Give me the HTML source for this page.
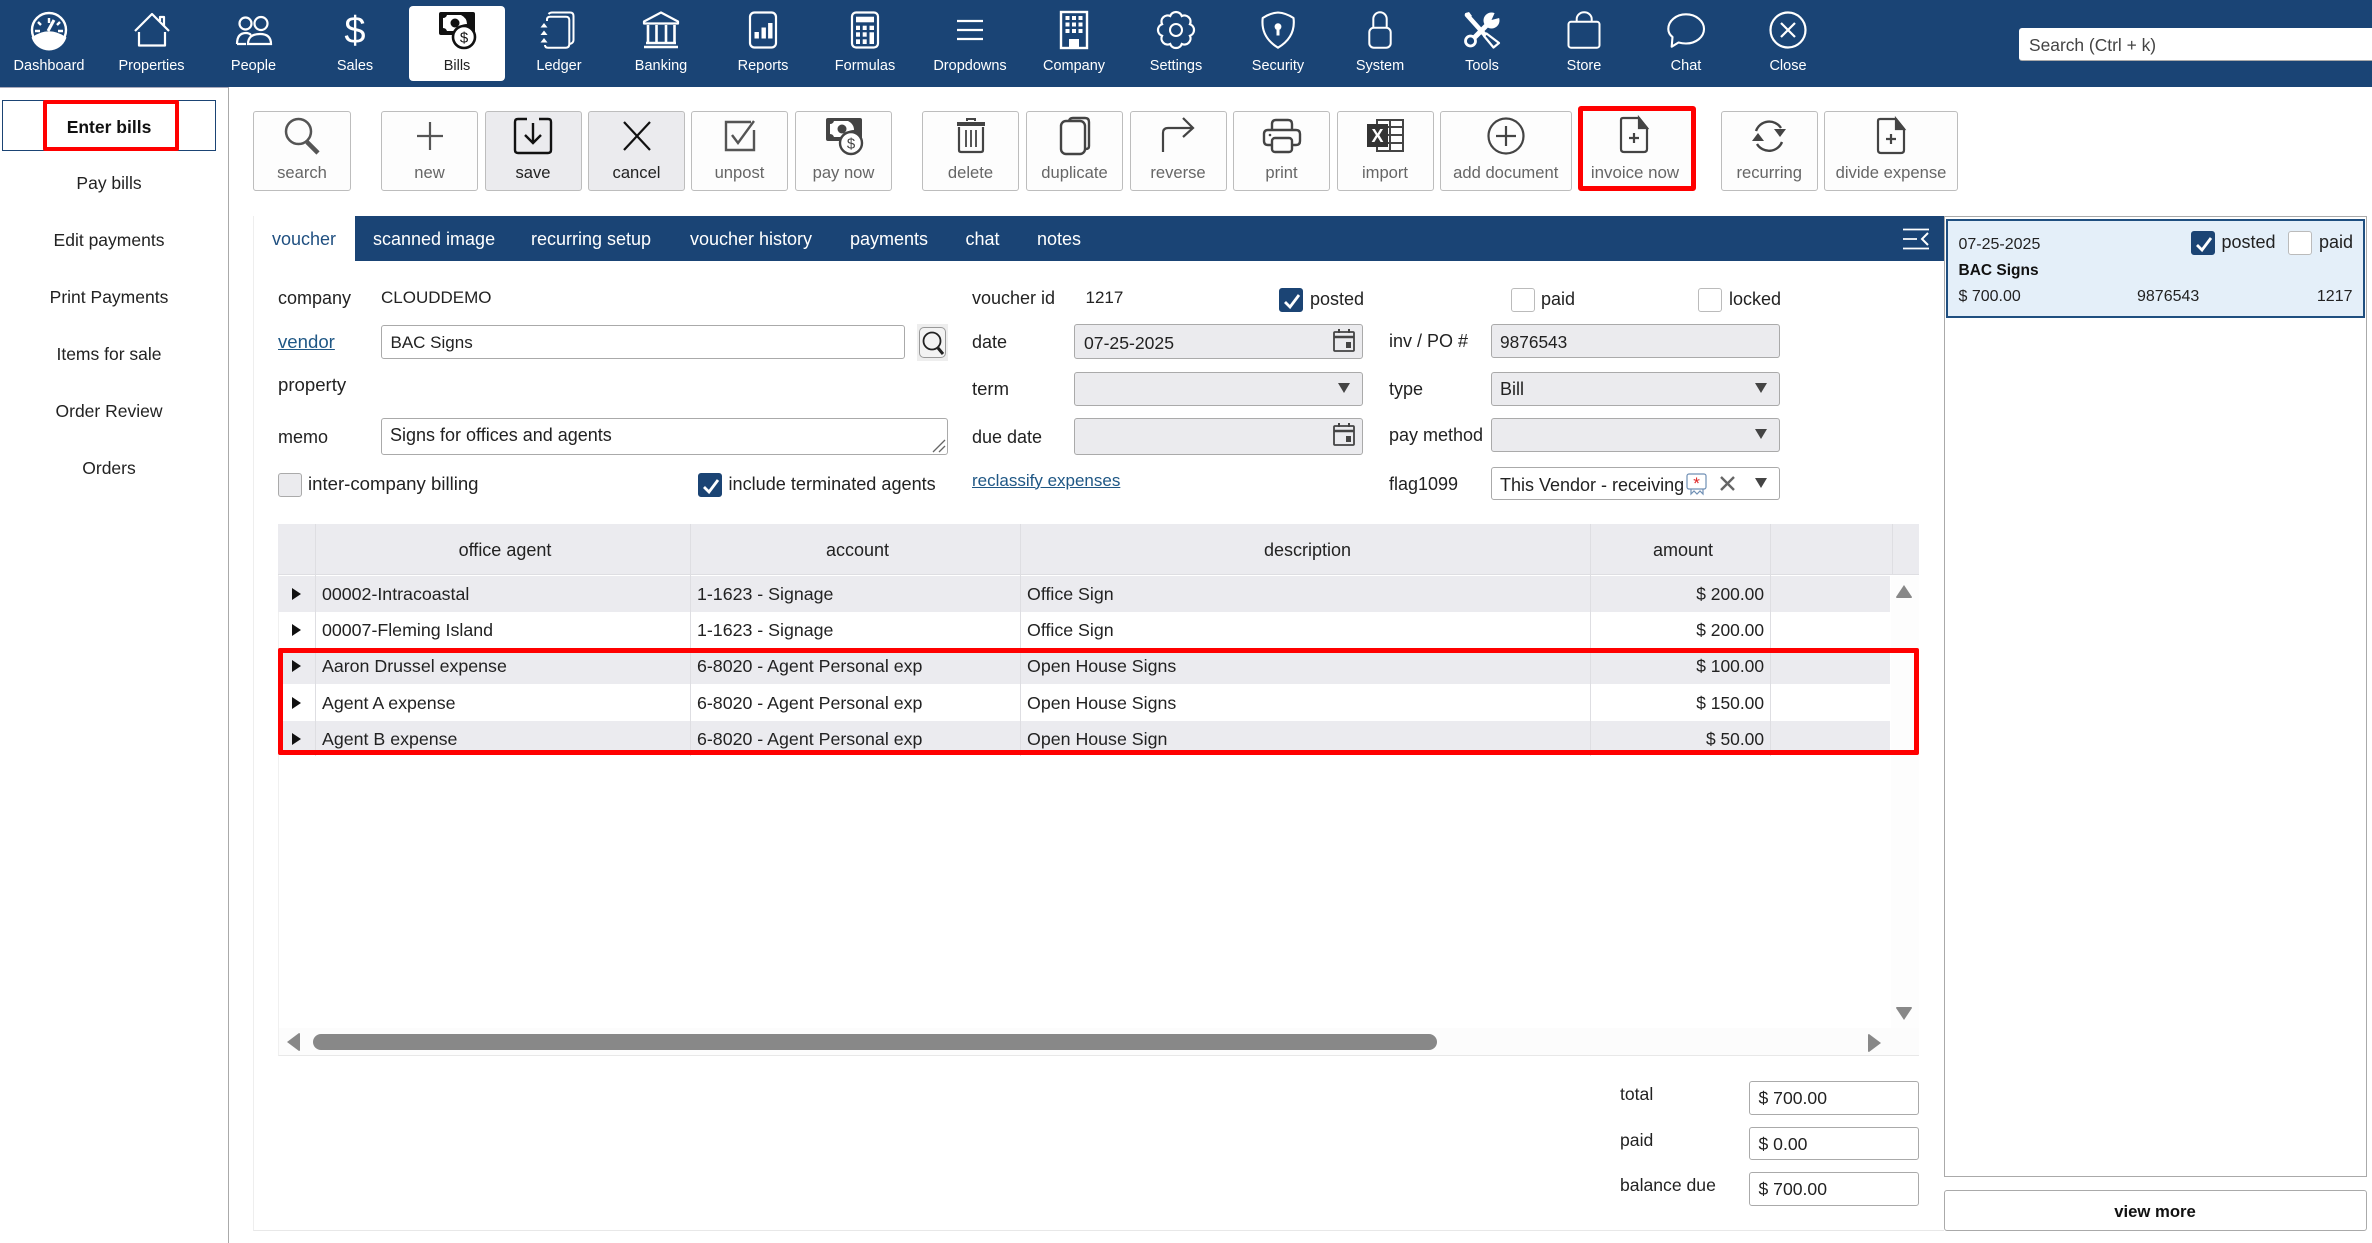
<!DOCTYPE html>
<html lang="en"><head><meta charset="utf-8"><title>Bills</title>
<style>
html,body{margin:0;padding:0;background:#fff}
body{position:relative;width:2372px;height:1243px;overflow:hidden;font-family:"Liberation Sans",sans-serif;color:#222}
.t{position:absolute;line-height:24px;white-space:nowrap;font-size:18px}
.c{transform:translateX(-50%)}
.r{transform:translateX(-100%)}
.b{position:absolute;box-sizing:border-box}
svg{position:absolute;overflow:visible}
.n{color:#fff;font-size:14.5px;top:53.5px}
.ni{top:10px;width:40px;height:40px}
.tb{position:absolute;box-sizing:border-box;top:111px;height:80px;border:1.5px solid #bdbdbd;border-radius:3px;background:#fdfdfd}
.tb span{position:absolute;left:0;right:0;text-align:center;top:49px;line-height:24px;font-size:16.6px;color:#666;white-space:nowrap}
.tb.d{background:#ebebee}.tb.d span{color:#222}
.tb svg{left:50%;margin-left:-20px;top:5.5px;width:40px;height:36px}
.side{font-size:17.5px;left:109px}
.tab{color:#fff;font-size:18px;top:227px}
.inp{position:absolute;box-sizing:border-box;border:1.5px solid #aaa;border-radius:3px;background:#fff}
.g{background:#ebebee}
.cb{position:absolute;box-sizing:border-box;width:24px;height:24px;border:1.5px solid #bbb;border-radius:3px;background:#fff}
.cb.on{background:#1b4474;border-color:#1b4474}
.cb.off{background:#ebebee;border-color:#aaa}
.cb svg{left:0;top:0;width:24px;height:24px}
.lk{color:#1f5785;text-decoration:underline}
.row{position:absolute;left:278px;width:1612px;background:#ebebef}
.vl{position:absolute;width:1px;top:524px;height:232px;background:#dedee2}
.tri{position:absolute;left:292px;width:0;height:0;border-top:6px solid transparent;border-bottom:6px solid transparent;border-left:9px solid #111}
.dn{position:absolute;width:0;height:0;border-left:6px solid transparent;border-right:6px solid transparent;border-top:10px solid #444}
</style></head><body>

<!-- NAV -->
<div class="b" style="left:0;top:0;width:2372px;height:87px;background:#1a4475"></div>
<div class="b" style="left:409px;top:6px;width:96px;height:75px;background:#fff;border-radius:4px"></div>

<svg class="ni" style="left:29px" viewBox="0 0 40 40" fill="none" stroke="#fff" stroke-width="2.4"><circle cx="20" cy="20" r="17"/><path d="M4 28Q20 17 36 28A17 17 0 0 1 4 28Z" fill="#fff"/><path d="M20 8v5M9 12l3 3M31 12l-3 3M6 21h5M29 21h5"/><path d="M19 21l6-11" stroke-width="3"/></svg>
<svg class="ni" style="left:131.5px" viewBox="0 0 40 40" fill="none" stroke="#fff" stroke-width="2.2" stroke-linejoin="round"><path d="M3 21L20 4L37 21M7 22V35.5H33V22M28 11V7h4V16"/></svg>
<svg class="ni" style="left:233.5px" viewBox="0 0 40 40" fill="none" stroke="#fff" stroke-width="2.2"><circle cx="11.5" cy="13.5" r="6"/><circle cx="27" cy="13.5" r="6.5"/><path d="M3 34Q3 23 12 23Q15 23 17 25M3 34H12M14 34Q14 24 26 24Q37 24 37 34Z"/></svg>
<svg class="ni" style="left:335px" viewBox="0 0 40 40"><text x="20" y="33" text-anchor="middle" fill="#fff" font-family="Liberation Sans" font-size="38">$</text></svg>
<svg class="ni" style="left:437px" viewBox="0 0 40 40"><rect x="2" y="2" width="36" height="23" rx="2" fill="#111"/><path d="M6 8Q9 8 10 5H24Q30 8 30 14Q22 14 20 21H10Q9 18 6 18Z" fill="#fff"/><circle cx="18" cy="13" r="4.5" fill="#111"/><circle cx="27" cy="27" r="11" fill="#fff" stroke="#111" stroke-width="2.6"/><text x="27" y="32.5" text-anchor="middle" fill="#111" font-family="Liberation Sans" font-size="15">$</text></svg>
<svg class="ni" style="left:539px" viewBox="0 0 40 40" fill="none" stroke="#fff" stroke-width="2"><path d="M9.5 4Q11 2.500 13 2.500H31Q34.500 2.500 34.500 6V30Q34.500 33 31 34"/><path d="M8 11V9.500Q8 6.700 11 6.700H27Q30.300 6.700 30.300 10V34Q30.300 37.700 27 37.700H9Q6 37.700 6 35"/><path d="M1.500 17.500L5 13L8.500 17.500ZM1.500 25L5 20.500L8.500 25ZM1.500 32.500L5 28L8.500 32.500Z" fill="#fff" stroke="none"/></svg>
<svg class="ni" style="left:641px" viewBox="0 0 40 40" fill="none" stroke="#fff" stroke-width="2.2"><path d="M20 2.500L37 11.500V13.500H3V11.500Z" stroke-linejoin="round"/><path d="M7 15V32M15.500 15V32M25 15V32M33.500 15V32" stroke-width="2.600"/><path d="M5 33H35M3 37H37" stroke-linejoin="round" stroke-width="2.400"/></svg>
<svg class="ni" style="left:743px" viewBox="0 0 40 40" fill="none" stroke="#fff" stroke-width="2.2"><rect x="7" y="2.500" width="26" height="35" rx="4.500"/><path d="M13.700 28.500V22M20.700 28.500V17.500M27.300 28.500V13" stroke-width="4.400"/></svg>
<svg class="ni" style="left:845px" viewBox="0 0 40 40" fill="none" stroke="#fff" stroke-width="2.2"><rect x="7" y="2.500" width="26" height="35" rx="4"/><g fill="#fff" stroke="none"><rect x="11" y="6.700" width="18" height="5.600"/><rect x="11" y="15.700" width="4" height="4.300"/><rect x="17.700" y="15.700" width="4" height="4.300"/><rect x="24.500" y="15.700" width="4.500" height="4.300"/><rect x="11" y="22.300" width="4" height="4.400"/><rect x="17.700" y="22.300" width="4" height="4.400"/><rect x="24.500" y="22.300" width="4.500" height="11.700"/><rect x="11" y="29.300" width="4" height="4.700"/><rect x="17.700" y="29.300" width="4" height="4.700"/></g></svg>
<svg class="ni" style="left:950px" viewBox="0 0 40 40" stroke="#fff" stroke-width="2.2"><path d="M7 11H33M7 20H33M7 29H33"/></svg>
<svg class="ni" style="left:1054px" viewBox="0 0 40 40" fill="none" stroke="#fff" stroke-width="2.4"><rect x="7" y="2" width="26" height="36"/><path d="M11.500 8h4M18 8h4M24.500 8h4M11.500 14.500h4M18 14.500h4M24.500 14.500h4M11.500 21h4M18 21h4M24.500 21h4" stroke-width="4"/><rect x="15" y="29" width="10" height="9" fill="#fff" stroke="none"/></svg>
<svg class="ni" style="left:1156px" viewBox="0 0 40 40" fill="none" stroke="#fff" stroke-width="2"><path transform="translate(20 20) scale(1.12) translate(-20 -20)" d="M32.470 25.170A5.500 5.500 0 0 1 25.170 32.470A5.500 5.500 0 0 1 14.830 32.470A5.500 5.500 0 0 1 7.530 25.170A5.500 5.500 0 0 1 7.530 14.830A5.500 5.500 0 0 1 14.830 7.530A5.500 5.500 0 0 1 25.170 7.530A5.500 5.500 0 0 1 32.470 14.830A5.500 5.500 0 0 1 32.470 25.170Z"/><circle cx="20" cy="20" r="6"/></svg>
<svg class="ni" style="left:1258px" viewBox="0 0 40 40" fill="none" stroke="#fff" stroke-width="2.1"><path d="M20 2.500Q28 3 35.500 8Q38 27 20 37.700Q2.500 27 4.700 8Q12 3 20 2.500Z" stroke-linejoin="round"/><circle cx="20" cy="16.700" r="3.400" fill="#fff" stroke="none"/><path d="M20 17V25.500" stroke-width="3"/></svg>
<svg class="ni" style="left:1360px" viewBox="0 0 40 40" fill="none" stroke="#fff" stroke-width="2"><path d="M13.300 18V9a6.700 6.700 0 0 1 13.400 0V18"/><rect x="9.300" y="17.800" width="21.400" height="19.900" rx="4.500"/></svg>
<svg class="ni" style="left:1462px" viewBox="0 0 40 40"><path d="M5 5L23 25" stroke="#fff" stroke-width="4.600" stroke-linecap="round" fill="none"/><path d="M3 3.300L7 2L10 6L6 9Z" fill="#fff"/><path d="M24.500 23.500L22 26L31.500 37.500L37 33Z" fill="#1a4475" stroke="#fff" stroke-width="2.200" stroke-linejoin="round"/><path d="M10 30L27 13" stroke="#fff" stroke-width="5" fill="none"/><circle cx="29.500" cy="10.500" r="8" fill="#fff"/><path d="M29.500 10L34 0L41 7Z" fill="#1a4475"/><circle cx="8.500" cy="31" r="5" fill="#1a4475" stroke="#fff" stroke-width="2.800"/></svg>
<svg class="ni" style="left:1564px" viewBox="0 0 40 40" fill="none" stroke="#fff" stroke-width="2"><path d="M12.700 12V9a7.500 6.700 0 0 1 15 0V12"/><rect x="4.500" y="11.800" width="31" height="25.900" rx="2.500"/></svg>
<svg class="ni" style="left:1666px" viewBox="0 0 40 40" fill="none" stroke="#fff" stroke-width="2.100" stroke-linejoin="round"><path d="M6.500 27C4 25 2.300 22 2.300 19C2.300 11 10 4.300 20 4.300C30 4.300 38 11 38 19C38 27 30 33.500 20 33.500C17 33.500 14.500 33 12.500 32.500L5.700 36.700Z"/></svg>
<svg class="ni" style="left:1768px" viewBox="0 0 40 40" fill="none" stroke="#fff" stroke-width="2.200"><circle cx="20" cy="20" r="17.500"/><path d="M13 13L27 27M27 13L13 27"/></svg>

<div class="t n c" style="left:49px">Dashboard</div>
<div class="t n c" style="left:151.500px">Properties</div>
<div class="t n c" style="left:253.500px">People</div>
<div class="t n c" style="left:355px">Sales</div>
<div class="t n c" style="left:457px;color:#222">Bills</div>
<div class="t n c" style="left:559px">Ledger</div>
<div class="t n c" style="left:661px">Banking</div>
<div class="t n c" style="left:763px">Reports</div>
<div class="t n c" style="left:865px">Formulas</div>
<div class="t n c" style="left:970px">Dropdowns</div>
<div class="t n c" style="left:1074px">Company</div>
<div class="t n c" style="left:1176px">Settings</div>
<div class="t n c" style="left:1278px">Security</div>
<div class="t n c" style="left:1380px">System</div>
<div class="t n c" style="left:1482px">Tools</div>
<div class="t n c" style="left:1584px">Store</div>
<div class="t n c" style="left:1686px">Chat</div>
<div class="t n c" style="left:1788px">Close</div>

<div class="b" style="left:2019px;top:28px;width:353px;height:33px;background:#fff;border-radius:3px 0 0 3px;border-bottom:1.500px solid #aaa"></div>
<div class="t" style="left:2029px;top:33px;font-size:17.400px;color:#444">Search (Ctrl + k)</div>

<!-- SIDEBAR -->
<div class="b" style="left:0;top:87px;width:229px;height:1156px;border-right:1.500px solid #aaa;border-top:1px solid #aab"></div>
<div class="b" style="left:2px;top:100px;width:214px;height:51px;border:1.500px solid #1b4474"></div>
<div class="b" style="left:43px;top:100px;width:136px;height:51px;border:4.500px solid #f00;border-radius:2px;background:#fff"></div>
<div class="t side c" style="top:114.500px;font-weight:bold;color:#111;font-size:17.500px">Enter bills</div>
<div class="t side c" style="top:171px">Pay bills</div>
<div class="t side c" style="top:228px">Edit payments</div>
<div class="t side c" style="top:285px">Print Payments</div>
<div class="t side c" style="top:342px">Items for sale</div>
<div class="t side c" style="top:399px">Order Review</div>
<div class="t side c" style="top:456px">Orders</div>

<!-- TOOLBAR -->
<div class="tb" style="left:253px;width:98px"><svg viewBox="0 0 40 36" fill="none" stroke="#555" stroke-width="2.500"><circle cx="16.500" cy="13.500" r="12.500"/><path d="M25 24L36 35" stroke-width="4.500"/></svg><span>search</span></div>
<div class="tb" style="left:381px;width:97px"><svg viewBox="0 0 40 36" stroke="#555" stroke-width="2.200"><path d="M7 18H33M20 4V32"/></svg><span>new</span></div>
<div class="tb d" style="left:484.500px;width:97px"><svg viewBox="0 0 40 36" fill="none" stroke="#111" stroke-width="2.400"><path d="M14 1H5Q2 1 2 4V32Q2 35 5 35H35Q38 35 38 32V4Q38 1 35 1H26"/><path d="M20 5V25M12 17L20 25L28 17"/></svg><span>save</span></div>
<div class="tb d" style="left:588px;width:97px"><svg viewBox="0 0 40 36" stroke="#111" stroke-width="2.200"><path d="M7 4L33 32M33 4L7 32"/></svg><span>cancel</span></div>
<div class="tb" style="left:691px;width:97px"><svg viewBox="0 0 40 36" fill="none" stroke="#555" stroke-width="2.400"><path d="M31 4H6V32H34V12"/><path d="M12 17L18 25L34 3"/></svg><span>unpost</span></div>
<div class="tb" style="left:795px;width:97px"><svg viewBox="0 0 40 36"><rect x="2" y="0" width="36" height="23" rx="2" fill="#444"/><path d="M6 6Q9 6 10 3H24Q30 6 30 12Q22 12 20 19H10Q9 16 6 16Z" fill="#fff"/><circle cx="18" cy="11" r="4.500" fill="#444"/><circle cx="27" cy="25" r="11" fill="#fff" stroke="#444" stroke-width="2.400"/><text x="27" y="30.500" text-anchor="middle" fill="#444" font-family="Liberation Sans" font-size="15">$</text></svg><span>pay now</span></div>
<div class="tb" style="left:922px;width:97px"><svg viewBox="0 0 40 36" fill="none" stroke="#444" stroke-width="2.200"><path d="M6 6H34" stroke-width="4"/><path d="M16 3V1H24V3" stroke-width="2"/><path d="M8 9V32Q8 34 10 34H30Q32 34 32 32V9"/><path d="M15 12V29M20 12V29M25 12V29" stroke-width="1.800"/></svg><span>delete</span></div>
<div class="tb" style="left:1026px;width:97px"><svg viewBox="0 0 40 36" fill="none" stroke="#444" stroke-width="2.400"><path d="M14 4Q14 0 18 0H30Q34 0 34 4V28Q34 31 31 31"/><rect x="6" y="3" width="24" height="33" rx="5" fill="#fdfdfd"/></svg><span>duplicate</span></div>
<div class="tb" style="left:1129.500px;width:97px"><svg viewBox="0 0 40 36" fill="none" stroke="#444" stroke-width="2.200"><path d="M5 34V15Q5 10 10 10H34"/><path d="M25 0L35 10L25 19"/></svg><span>reverse</span></div>
<div class="tb" style="left:1233px;width:97px"><svg viewBox="0 0 40 36" fill="none" stroke="#444" stroke-width="2.400"><path d="M10 12V6Q10 2 14 2H26Q30 2 30 6V12"/><path d="M10 27H6Q2 27 2 23V16Q2 12 6 12H34Q38 12 38 16V23Q38 27 34 27H30"/><rect x="10" y="20" width="20" height="14" rx="3"/><circle cx="8" cy="17" r="1.300" fill="#444" stroke="none"/></svg><span>print</span></div>
<div class="tb" style="left:1336.500px;width:97px"><svg viewBox="0 0 40 36"><rect x="12" y="2" width="26" height="31" fill="none" stroke="#444" stroke-width="2"/><path d="M25 2V33M12 9H38M12 17H38M12 25H38" stroke="#444" stroke-width="2"/><rect x="2" y="6" width="21" height="23" fill="#333"/><text x="12.500" y="24" text-anchor="middle" fill="#fff" font-family="Liberation Sans" font-weight="bold" font-size="18">X</text></svg><span>import</span></div>
<div class="tb" style="left:1440px;width:131.500px"><svg viewBox="0 0 40 36" fill="none" stroke="#444" stroke-width="2.200"><circle cx="20" cy="18" r="17.500"/><path d="M10 18H30M20 8V28"/></svg><span>add document</span></div>
<div class="b" style="left:1578px;top:106px;width:118px;height:85px;border:5px solid #f00;border-radius:3px;background:#fdfdfd"></div>
<svg style="left:1614px;top:116.500px;width:40px;height:36px" viewBox="0 0 40 36" fill="none" stroke="#444" stroke-width="2.200"><path d="M9 1H25L33 11V32Q33 35 30 35H10Q7 35 7 32V3Q7 1 9 1Z"/><path d="M25 1L33 11H25Z" fill="#444"/><path d="M15 21H25M20 16V26"/></svg>
<div class="t c" style="left:1635px;top:160.500px;font-size:16.900px;color:#666">invoice now</div>
<div class="tb" style="left:1721px;width:96.500px"><svg viewBox="0 0 40 36" fill="none" stroke="#444" stroke-width="2.400"><path d="M7 13A14 14 0 0 1 32 10M33 24A14 14 0 0 1 8 26"/><path d="M25 11H37L31 19ZM3 23H15L9 15Z" fill="#444" stroke="none"/></svg><span>recurring</span></div>
<div class="tb" style="left:1824px;width:134px"><svg viewBox="0 0 40 36" fill="none" stroke="#444" stroke-width="2.200"><path d="M9 1H25L33 11V32Q33 35 30 35H10Q7 35 7 32V3Q7 1 9 1Z"/><path d="M25 1L33 11H25Z" fill="#444"/><path d="M15 21H25M20 16V26"/></svg><span>divide expense</span></div>

<!-- MAIN PANEL -->
<div class="b" style="left:253px;top:216px;width:1691px;height:1015px;border-left:1.500px solid #eee;border-bottom:1.500px solid #e8e8e8"></div>
<div class="b" style="left:355px;top:216px;width:1589px;height:45px;background:#1a4475"></div>
<div class="t" style="left:272px;top:227px;font-size:18px;color:#1f4f80">voucher</div>
<div class="t tab" style="left:373px">scanned image</div>
<div class="t tab" style="left:531px">recurring setup</div>
<div class="t tab" style="left:690px">voucher history</div>
<div class="t tab" style="left:850px">payments</div>
<div class="t tab" style="left:965.500px">chat</div>
<div class="t tab" style="left:1037px">notes</div>
<svg style="left:1903px;top:228px;width:26px;height:22px" viewBox="0 0 26 22" fill="none" stroke="#fff" stroke-width="1.800"><path d="M0 1.500H26M0 11H14M0 20.500H26"/><path d="M25 5L19 11L25 17" stroke-width="2"/></svg>

<!-- FORM -->
<div class="t" style="left:278px;top:286px">company</div>
<div class="t" style="left:381px;top:286px;font-size:17px">CLOUDDEMO</div>
<div class="t lk" style="left:278px;top:330px;font-size:18.600px">vendor</div>
<div class="inp" style="left:380.500px;top:325px;width:524.500px;height:34px"></div>
<div class="t" style="left:390.500px;top:331px;font-size:17px">BAC Signs</div>
<div class="b" style="left:917px;top:324px;width:31px;height:37px;background:#eee"></div>
<div class="b" style="left:919px;top:327px;width:27px;height:31px;border:1.200px solid #999;border-radius:5px;background:#f3f3f3"></div>
<svg style="left:921px;top:330px;width:24px;height:26px" viewBox="0 0 24 26" fill="none" stroke="#222" stroke-width="1.800"><circle cx="11" cy="11" r="8.500"/><path d="M17 18L22 24" stroke-width="3"/></svg>
<div class="t" style="left:278px;top:373px;font-size:18.600px">property</div>
<div class="t" style="left:278px;top:425px">memo</div>
<div class="inp" style="left:380.500px;top:418px;width:567.500px;height:37px"></div>
<div class="t" style="left:390px;top:423px">Signs for offices and agents</div>
<svg style="left:932px;top:438px;width:14px;height:15px" viewBox="0 0 14 15" stroke="#666" stroke-width="1.300"><path d="M1 14L13 2M7 14L13 8"/></svg>
<div class="cb off" style="left:278px;top:473px"></div>
<div class="t" style="left:308px;top:472px;font-size:18.600px">inter-company billing</div>
<div class="cb on" style="left:698px;top:473px"><svg viewBox="0 0 24 24" fill="none" stroke="#fff" stroke-width="2.800"><path d="M5 13L10 18L19 6"/></svg></div>
<div class="t" style="left:728.500px;top:472px;font-size:18.100px">include terminated agents</div>

<div class="t" style="left:972px;top:286px">voucher id</div>
<div class="t" style="left:1085.500px;top:286px;font-size:17px">1217</div>
<div class="cb on" style="left:1279px;top:288px"><svg viewBox="0 0 24 24" fill="none" stroke="#fff" stroke-width="2.800"><path d="M5 13L10 18L19 6"/></svg></div>
<div class="t" style="left:1310px;top:287px">posted</div>
<div class="cb" style="left:1511px;top:288px"></div>
<div class="t" style="left:1541px;top:287px">paid</div>
<div class="cb" style="left:1698px;top:288px"></div>
<div class="t" style="left:1729px;top:287px">locked</div>

<div class="t" style="left:972px;top:330px">date</div>
<div class="inp g" style="left:1074px;top:324px;width:289px;height:35px"></div>
<div class="t" style="left:1084px;top:331px;font-size:17.600px">07-25-2025</div>
<svg style="left:1333px;top:329px;width:22px;height:23px" viewBox="0 0 22 23" fill="none" stroke="#444" stroke-width="1.800"><rect x="1" y="3" width="20" height="19" rx="1"/><path d="M1 8H21" stroke-width="2.500"/><path d="M6 0V4M16 0V4" stroke-width="2"/><rect x="13" y="13" width="5" height="6" fill="#444" stroke="none"/></svg>
<div class="t" style="left:1389px;top:329px">inv / PO #</div>
<div class="inp g" style="left:1490.500px;top:324px;width:289px;height:34px"></div>
<div class="t" style="left:1500px;top:329.500px;font-size:17.300px">9876543</div>

<div class="t" style="left:972px;top:377px;font-size:18.500px">term</div>
<div class="inp g" style="left:1074px;top:372px;width:289px;height:34px"></div>
<div class="dn" style="left:1338px;top:383px"></div>
<div class="t" style="left:1389px;top:377px">type</div>
<div class="inp g" style="left:1490.500px;top:372px;width:289px;height:34px"></div>
<div class="t" style="left:1500px;top:377px">Bill</div>
<div class="dn" style="left:1754.500px;top:383px"></div>

<div class="t" style="left:972px;top:425px">due date</div>
<div class="inp g" style="left:1074px;top:418px;width:289px;height:37px"></div>
<svg style="left:1333px;top:423px;width:22px;height:23px" viewBox="0 0 22 23" fill="none" stroke="#444" stroke-width="1.800"><rect x="1" y="3" width="20" height="19" rx="1"/><path d="M1 8H21" stroke-width="2.500"/><path d="M6 0V4M16 0V4" stroke-width="2"/><rect x="13" y="13" width="5" height="6" fill="#444" stroke="none"/></svg>
<div class="t" style="left:1389px;top:423px">pay method</div>
<div class="inp g" style="left:1490.500px;top:418px;width:289px;height:34px"></div>
<div class="dn" style="left:1754.500px;top:429px"></div>

<div class="t lk" style="left:972px;top:468.500px;font-size:17px">reclassify expenses</div>
<div class="t" style="left:1389px;top:472px">flag1099</div>
<div class="inp" style="left:1490.500px;top:467px;width:289px;height:33px"></div>
<div class="t" style="left:1500px;top:473px">This Vendor - receiving</div>
<svg style="left:1686px;top:473px;width:22px;height:22px" viewBox="0 0 22 22" fill="#fff" stroke="#6f8fb5" stroke-width="1.200"><rect x="1" y="1" width="19" height="15" rx="2"/><path d="M5 16V21L8 18L11 21L14 18L17 21V16" fill="none"/><text x="10.500" y="16" text-anchor="middle" fill="#d22" stroke="none" font-family="Liberation Sans" font-size="17">*</text></svg>
<svg style="left:1720px;top:476px;width:15px;height:15px" viewBox="0 0 15 15" stroke="#666" stroke-width="2.400"><path d="M1 1L14 14M14 1L1 14"/></svg>
<div class="dn" style="left:1754.500px;top:478px"></div>

<!-- TABLE -->
<div class="b" style="left:278px;top:524px;width:1641px;height:532px;border-left:1.500px solid #f0f0f0;border-bottom:1.500px solid #e8e8e8"></div>
<div class="b" style="left:278px;top:524px;width:1641px;height:51px;background:#ebebef;border-bottom:1.500px solid #dedee2"></div>
<div class="row" style="top:576px;height:36px"></div>
<div class="row" style="top:648px;height:36px"></div>
<div class="row" style="top:721px;height:34px"></div>
<div class="vl" style="left:315px"></div><div class="vl" style="left:690px"></div><div class="vl" style="left:1020px"></div><div class="vl" style="left:1590px"></div><div class="vl" style="left:1770px"></div><div class="vl" style="left:1892px;height:51px"></div>

<div class="t c" style="left:505px;top:538px">office agent</div>
<div class="t c" style="left:857.500px;top:538px">account</div>
<div class="t c" style="left:1307.500px;top:538px">description</div>
<div class="t c" style="left:1683px;top:538px">amount</div>

<div class="tri" style="top:588px"></div><div class="tri" style="top:624px"></div><div class="tri" style="top:660px"></div><div class="tri" style="top:697px"></div><div class="tri" style="top:733px"></div>

<div class="t" style="left:322px;top:582px;font-size:17.800px">00002-Intracoastal</div>
<div class="t" style="left:697px;top:582px;font-size:17.800px">1-1623 - Signage</div>
<div class="t" style="left:1027px;top:582px;font-size:17.800px">Office Sign</div>
<div class="t r" style="left:1764px;top:582px;font-size:17.400px">$ 200.00</div>

<div class="t" style="left:322px;top:618px;font-size:17.800px">00007-Fleming Island</div>
<div class="t" style="left:697px;top:618px;font-size:17.800px">1-1623 - Signage</div>
<div class="t" style="left:1027px;top:618px;font-size:17.800px">Office Sign</div>
<div class="t r" style="left:1764px;top:618px;font-size:17.400px">$ 200.00</div>

<div class="t" style="left:322px;top:654px;font-size:17.800px">Aaron Drussel expense</div>
<div class="t" style="left:697px;top:654px;font-size:17.800px">6-8020 - Agent Personal exp</div>
<div class="t" style="left:1027px;top:654px;font-size:17.800px">Open House Signs</div>
<div class="t r" style="left:1764px;top:654px;font-size:17.400px">$ 100.00</div>

<div class="t" style="left:322px;top:691px;font-size:17.800px">Agent A expense</div>
<div class="t" style="left:697px;top:691px;font-size:17.800px">6-8020 - Agent Personal exp</div>
<div class="t" style="left:1027px;top:691px;font-size:17.800px">Open House Signs</div>
<div class="t r" style="left:1764px;top:691px;font-size:17.400px">$ 150.00</div>

<div class="t" style="left:322px;top:727px;font-size:17.800px">Agent B expense</div>
<div class="t" style="left:697px;top:727px;font-size:17.800px">6-8020 - Agent Personal exp</div>
<div class="t" style="left:1027px;top:727px;font-size:17.800px">Open House Sign</div>
<div class="t r" style="left:1764px;top:727px;font-size:17.400px">$ 50.00</div>

<div class="b" style="left:1891px;top:576px;width:28px;height:452px;background:#fdfdfd"></div>
<div class="b" style="left:279px;top:1028px;width:1640px;height:27px;background:#fcfcfc"></div>
<div class="b" style="left:278px;top:648px;width:1641px;height:107px;border:5px solid #f00;border-radius:2px"></div>

<svg style="left:1895px;top:584px;width:18px;height:15px" viewBox="0 0 18 15"><path d="M9 1L17 13Q17 14 16 14H2Q1 14 1 13Z" fill="#888"/></svg>
<svg style="left:1895px;top:1006px;width:18px;height:15px" viewBox="0 0 18 15"><path d="M9 14L17 2Q17 1 16 1H2Q1 1 1 2Z" fill="#888"/></svg>
<svg style="left:287px;top:1033px;width:14px;height:18px" viewBox="0 0 14 18"><path d="M0 9L12 0Q13 0 13 1V17Q13 18 12 18Z" fill="#888"/></svg>
<svg style="left:1868px;top:1034px;width:14px;height:18px" viewBox="0 0 14 18"><path d="M13 9L1 0Q0 0 0 1V17Q0 18 1 18Z" fill="#888"/></svg>
<div class="b" style="left:313px;top:1034px;width:1124px;height:16px;background:#888;border-radius:8px"></div>

<!-- TOTALS -->
<div class="t" style="left:1620px;top:1082px;font-size:17.600px">total</div>
<div class="inp" style="left:1748.500px;top:1081px;width:170.500px;height:34px"></div>
<div class="t" style="left:1758.500px;top:1086px;font-size:17.600px">$ 700.00</div>
<div class="t" style="left:1620px;top:1128px;font-size:17.600px">paid</div>
<div class="inp" style="left:1748.500px;top:1127px;width:170.500px;height:33px"></div>
<div class="t" style="left:1758.500px;top:1132px;font-size:17.600px">$ 0.00</div>
<div class="t" style="left:1620px;top:1173px;font-size:17.600px">balance due</div>
<div class="inp" style="left:1748.500px;top:1172px;width:170.500px;height:34px"></div>
<div class="t" style="left:1758.500px;top:1177px;font-size:17.600px">$ 700.00</div>

<!-- RIGHT PANEL -->
<div class="b" style="left:1944px;top:216px;width:423px;height:961px;border:1.500px solid #aaa"></div>
<div class="b" style="left:1946px;top:218.500px;width:419px;height:99px;background:#e4eff9;border:2px solid #1f4f80"></div>
<div class="t" style="left:1958.500px;top:232.500px;font-size:16px">07-25-2025</div>
<div class="cb on" style="left:2191px;top:231px"><svg viewBox="0 0 24 24" fill="none" stroke="#fff" stroke-width="2.800"><path d="M5 13L10 18L19 6"/></svg></div>
<div class="t" style="left:2221.500px;top:230px;font-size:18px">posted</div>
<div class="cb" style="left:2288px;top:231px"></div>
<div class="t" style="left:2319px;top:230px;font-size:18px">paid</div>
<div class="t" style="left:1958.500px;top:258.500px;font-weight:bold;font-size:15.500px;color:#111">BAC Signs</div>
<div class="t" style="left:1958.500px;top:284.500px;font-size:16px">$ 700.00</div>
<div class="t" style="left:2137px;top:284.500px;font-size:16px">9876543</div>
<div class="t r" style="left:2352.500px;top:284.500px;font-size:16px">1217</div>
<div class="inp" style="left:1944px;top:1190px;width:423px;height:40.500px"></div>
<div class="t c" style="left:2155px;top:1199.500px;font-weight:bold;font-size:16.700px;color:#111">view more</div>

</body></html>
